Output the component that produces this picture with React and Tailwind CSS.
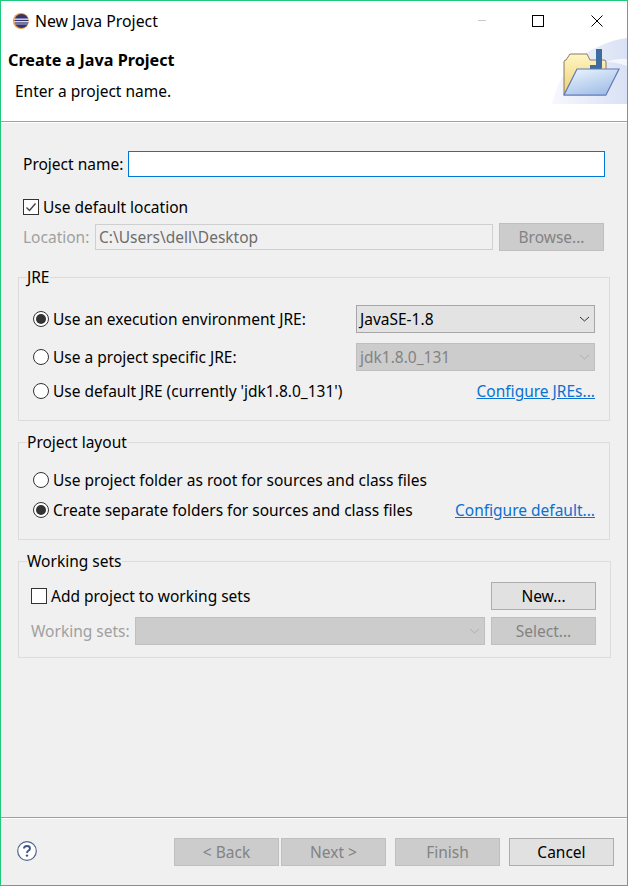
import React from 'react';

const Radio = ({ checked }) => (
  <span className="w-[16px] h-[16px] rounded-full border border-[#333] bg-white flex items-center justify-center shrink-0">
    {checked && <span className="w-[10px] h-[10px] rounded-full bg-[#333]" />}
  </span>
);

const Check = ({ checked }) => (
  <span className="w-[16px] h-[16px] border border-[#333] bg-white flex items-center justify-center shrink-0">
    {checked && (
      <svg width="12" height="12" viewBox="0 0 12 12" fill="none" stroke="#444" strokeWidth="1.4">
        <path d="M1.5 6.5 L4.5 9.5 L10.5 2.5" />
      </svg>
    )}
  </span>
);

const Btn = ({ children, disabled, className = '' }) => (
  <div
    className={`h-[28px] flex items-center justify-center border ${
      disabled
        ? 'bg-[#cccccc] border-[#bfbfbf] text-[#838383]'
        : 'bg-[#e1e1e1] border-[#adadad] text-black'
    } ${className}`}
  >
    {children}
  </div>
);

const Combo = ({ children, disabled, className = '' }) => (
  <div
    className={`h-[28px] flex items-center justify-between pl-[3px] pr-[4px] border ${
      disabled
        ? 'bg-[#cccccc] border-[#bfbfbf] text-[#838383]'
        : 'bg-[#e3e3e3] border-[#a6a6a6] text-black'
    } ${className}`}
  >
    <span>{children}</span>
    <svg width="11" height="6" viewBox="0 0 11 6" fill="none" stroke={disabled ? '#b0b0b0' : '#333'}>
      <path d="M1 1 L5.5 5 L10 1" />
    </svg>
  </div>
);

const Group = ({ title, className = '', children }) => (
  <fieldset className={`mx-[17px] border border-[#dcdcdc] pl-[8px] pr-[14px] ${className}`}>
    <legend className="leading-[14px]">{title}</legend>
    {children}
  </fieldset>
);

// coordinates in the viewBox are page coordinates
const BannerArt = () => (
  <svg width="76" height="67" viewBox="551 37 76 67">
    <defs>
      <linearGradient id="wash" x1="0" y1="0" x2="1" y2="0">
        <stop offset="0" stopColor="#f6f8fd" />
        <stop offset="1" stopColor="#d9e1f4" />
      </linearGradient>
      <linearGradient id="back" x1="0" y1="0" x2="0" y2="1">
        <stop offset="0" stopColor="#fff6c4" />
        <stop offset="1" stopColor="#ecce72" />
      </linearGradient>
      <linearGradient id="front" x1="0" y1="0" x2="0.6" y2="1">
        <stop offset="0" stopColor="#eef7ff" />
        <stop offset="1" stopColor="#a4c0e8" />
      </linearGradient>
    </defs>
    <path d="M552 104 Q562 60 600 46 Q615 39 627 38 V104 Z" fill="url(#wash)" />
    <path d="M606 62 Q618 58 627 59 V66 Q616 62 606 62 Z" fill="#ffffff" opacity="0.7" />
    <path d="M564 95 V62 Q564 60 566 60 L570 54 H587 L590 60 H604 Q606 60 606 62 V95 Z" fill="url(#back)" stroke="#8c7a62" />
    <path d="M590 65 H596 V49 H602 V67 Q602 70 599 70 H590 Z" fill="#3d6d9e" />
    <path d="M577 69 H619 L606 95 H564 Z" fill="url(#front)" stroke="#6278b8" strokeWidth="1.2" />
  </svg>
);

const App = () => {
  return (
    <div className="w-[628px] h-[886px] flex flex-col border border-[#1fc97c] bg-[#f0f0f0] text-[15.5px] leading-[24px] text-black overflow-hidden font-['Noto_Sans','Open_Sans',sans-serif]">
      {/* title + banner */}
      <div className="relative h-[120px] bg-white border-b border-[#a0a0a0] box-content">
        <div className="h-[39px] flex items-center pl-[11px]">
          <svg width="18" height="18" viewBox="0 0 18 18" className="mr-[5px]">
            <circle cx="9" cy="9" r="8" fill="#e89a3c" />
            <circle cx="9.5" cy="9" r="7" fill="#35326f" />
            <rect x="2" y="6.5" width="15" height="1.4" fill="#d8d8ec" />
            <rect x="2" y="9" width="15" height="1.4" fill="#d8d8ec" />
            <rect x="3" y="11.5" width="13" height="1" fill="#b8b8d8" />
          </svg>
          <span className="text-[15.8px] leading-[22px]">New Java Project</span>
          <div className="ml-auto flex items-center pr-[24px]">
            <span className="w-[8px] h-px bg-[#c8c8c8] mr-[46px]" />
            <span className="w-[12px] h-[12px] border border-black mr-[47px]" />
            <svg width="12" height="12" viewBox="0 0 12 12" stroke="black">
              <path d="M0.5 0.5 L11.5 11.5 M11.5 0.5 L0.5 11.5" />
            </svg>
          </div>
        </div>
        <div className="pl-[7px] font-bold text-[16.2px] leading-[20px] mt-[10px]">Create a Java Project</div>
        <div className="pl-[14px] leading-[20px] mt-[11px]">Enter a project name.</div>
        <div className="absolute right-0 top-[36px] flex">
          <BannerArt />
        </div>
      </div>
      <div className="h-px bg-white" />

      {/* form */}
      <div className="flex-1 flex flex-col">
        <div className="flex items-center mt-[28px] pl-[22px] pr-[22px]">
          <span className="w-[105px]">Project name:</span>
          <div className="flex-1 h-[26px] bg-white border border-[#0078d7]" />
        </div>
        <div className="flex items-center gap-[4px] mt-[22px] pl-[22px] h-[16px]">
          <Check checked />
          <span>Use default location</span>
        </div>
        <div className="flex items-center mt-[8px] pl-[22px] pr-[23px]">
          <span className="w-[72px] text-[#a0a0a0]">Location:</span>
          <div className="w-[398px] h-[26px] flex items-center pl-[3px] bg-[#f0f0f0] border border-[#cfcfcf] text-[#6d6d6d]">
            C:\Users\dell\Desktop
          </div>
          <Btn disabled className="ml-[6px] flex-1">Browse...</Btn>
        </div>

        <Group title="JRE" className="mt-[19px] h-[151px]">
          <div className="flex items-center pt-[21px] pl-[6px]">
            <Radio checked />
            <span className="ml-[4px] w-[303px]">Use an execution environment JRE:</span>
            <Combo className="w-[239px]">JavaSE-1.8</Combo>
          </div>
          <div className="flex items-center mt-[10px] pl-[6px]">
            <Radio />
            <span className="ml-[4px] w-[303px]">Use a project specific JRE:</span>
            <Combo disabled className="w-[239px]">jdk1.8.0_131</Combo>
          </div>
          <div className="flex items-center justify-between mt-[8px] pl-[6px]">
            <div className="flex items-center gap-[4px]">
              <Radio />
              <span>Use default JRE (currently 'jdk1.8.0_131')</span>
            </div>
            <span className="text-[#0a70d2] underline">Configure JREs...</span>
          </div>
        </Group>

        <Group title="Project layout" className="mt-[14px] h-[105px]">
          <div className="flex items-center gap-[4px] pt-[19px] pl-[6px]">
            <Radio />
            <span>Use project folder as root for sources and class files</span>
          </div>
          <div className="flex items-center justify-between mt-[6px] pl-[6px]">
            <div className="flex items-center gap-[4px]">
              <Radio checked />
              <span>Create separate folders for sources and class files</span>
            </div>
            <span className="text-[#0a70d2] underline">Configure default...</span>
          </div>
        </Group>

        <Group title="Working sets" className="mt-[14px] h-[104px]">
          <div className="flex items-center justify-between pt-[14px] pl-[4px]">
            <div className="flex items-center gap-[4px]">
              <Check />
              <span>Add project to working sets</span>
            </div>
            <Btn className="w-[105px]">New...</Btn>
          </div>
          <div className="flex items-center mt-[7px] pl-[4px]">
            <span className="w-[104px] text-[#a0a0a0]">Working sets:</span>
            <Combo disabled className="w-[350px]" />
            <Btn disabled className="ml-[6px] w-[105px]">Select...</Btn>
          </div>
        </Group>
      </div>

      {/* footer */}
      <div className="h-[68px] border-t border-[#a0a0a0] shadow-[inset_0_1px_0_#ffffff] flex items-start pt-[20px] pl-[16px] pr-[13px]">
        <svg width="20" height="20" viewBox="0 0 20 20" className="mt-[3px]">
          <circle cx="10" cy="10" r="9.3" fill="#fff" stroke="#52658f" strokeWidth="1.2" />
          <path d="M7 7.6 Q7 5 10 5 Q13 5 13 7.5 Q13 9 11 10 Q10 10.6 10 12" fill="none" stroke="#3f5587" strokeWidth="1.9" />
          <circle cx="10" cy="14.6" r="1.2" fill="#3f5587" />
        </svg>
        <div className="ml-auto flex">
          <Btn disabled className="w-[105px]">&lt; Back</Btn>
          <Btn disabled className="w-[105px] ml-[2px]">Next &gt;</Btn>
          <Btn disabled className="w-[105px] ml-[9px]">Finish</Btn>
          <Btn className="w-[105px] ml-[9px]">Cancel</Btn>
        </div>
      </div>
    </div>
  );
};

export default App;
